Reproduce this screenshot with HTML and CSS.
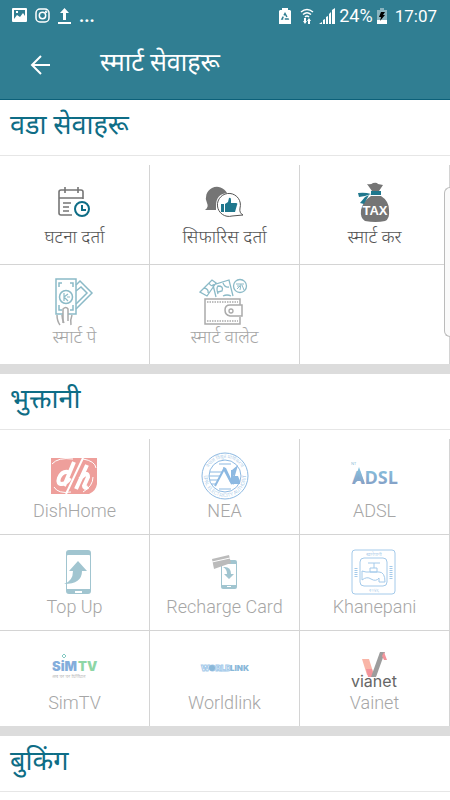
FILE: index.html
```html
<!DOCTYPE html>
<html lang="ne">
<head>
  <meta charset="UTF-8">
  <meta name="viewport" content="width=device-width, initial-scale=1">
  <title>स्मार्ट सेवाहरू</title>
  <link rel="stylesheet" href="styles.css">
</head>
<body>
  <header class="app-header">
    <div class="status-bar">
      <div class="status-left">
        <svg width="15" height="15" viewBox="0 0 15 15"><path fill="#fff" fill-rule="evenodd" d="M1 0h13a1 1 0 0 1 1 1v12a1 1 0 0 1-1 1H1a1 1 0 0 1-1-1V1a1 1 0 0 1 1-1zm1 2v9l3-4 3 2 3-4 2 3V2zm2 1h2v2H4z"/></svg>
        <svg width="15" height="15" viewBox="0 0 15 15" fill="none" stroke="#fff" stroke-width="1.5"><rect x="1" y="1" width="13" height="13" rx="4"/><circle cx="7.5" cy="7.5" r="3.2"/><circle cx="11.2" cy="3.8" r=".5"/></svg>
        <svg width="13" height="16" viewBox="0 0 13 16" fill="#fff"><path d="M6.5 0 11 5H8v7H5V5H2zM0 14h13v2H0z"/></svg>
        <span class="dots">...</span>
      </div>
      <div class="status-right">
        <svg width="12" height="16" viewBox="0 0 12 16"><path fill="#fff" d="M3 0h6v2h2l1 1v13H0V3l1-1h2z"/><path fill="none" stroke="#307e92" stroke-width="1.5" stroke-dasharray="4 1.5" d="M6 5.500 9 11H3z"/></svg>
        <svg class="wifi" width="14" height="16" viewBox="0 0 14 16" fill="none" stroke="#fff" stroke-width="1.5"><path d="M1 4q6-5 12 0M3 6.500q4-3.500 8 0M5 9q2-2 4 0"/><path fill="#fff" stroke="none" d="M4 10h2v3h1l-2 3-2-3h1zM9 10l2 3h-1v3H8v-3H7z"/></svg>
        <svg width="16" height="16" viewBox="0 0 16 16" fill="#fff"><path d="M0 16l3-2v2zM4 12l2-1v5H4zM7 9l2-1v8H7zM10 6l2-2v12h-2zM13 2l3-2v16h-3z"/></svg>
        <span>24%</span>
        <svg width="10" height="16" viewBox="0 0 10 16"><path fill="#8ab4bf" d="M3 0h4v2h3v10H0V2h3z"/><path fill="#fff" d="M0 12h10v4H0z"/><path d="M4 4h4L6 7h2l-5 6 1-4H2z"/></svg>
        <span class="clock">17:07</span>
      </div>
    </div>
    <div class="title-bar">
      <button class="back" aria-label="Back">
        <svg width="20" height="20" viewBox="0 0 20 20" fill="none" stroke="#fff" stroke-width="2"><path d="M20 10H2M11 1l-9 9 9 9"/></svg>
      </button>
      <h1>स्मार्ट सेवाहरू</h1>
    </div>
  </header>

  <main>
    <section>
      <h2>वडा सेवाहरू</h2>
      <div class="grid tall">
        <button class="tile">
          <svg class="icon" viewBox="2 2 48 48" fill="none" stroke="#757575" stroke-width="1.6"><path d="M23 39H12q-2 0-2-2V16q0-2 2-2h20q2 0 2 2v7M10 22h24M16 11v6M29 11v6M14 27h8M14 31h6M14 35h6"/><circle cx="33" cy="33" r="7" stroke="#0e6d86" stroke-width="2"/><path stroke="#0e6d86" stroke-width="2" d="M33 29v5h4"/></svg>
          <span>घटना दर्ता</span>
        </button>
        <button class="tile">
          <svg class="icon" viewBox="1 2 48 48"><path fill="#757575" d="M5 34q4-3 2-7A11 11 0 1 1 27 17q-11 1-11 13v4z"/><path fill="#fff" stroke="#555" stroke-linejoin="round" d="M43 39q-4-2-3-7a11.500 11.500 0 1 0-8 8z"/><path fill="#1f778d" d="M21 28h3v8h-3zM25 28l3-2 1-4q2-1 2 2v3h5q2 0 1 2l-2 7H25z"/></svg>
          <span>सिफारिस दर्ता</span>
        </button>
        <button class="tile">
          <svg class="icon" viewBox="0 0 48 48"><path fill="#757575" d="M16 6q4 1 6-1 4-1 5 1l5 1-4 6H21zM20 18h10q8 5 8 14 1 9-4 11-9 2-20 0-5-3-4-11 2-9 10-14z"/><path fill="#1f778d" d="M20 13h10v4H20zM7 15q7-1 13 1l-6 2-6 1zM18 17l-5 9-4-1 5-6z"/><text class="tax" x="24" y="37" text-anchor="middle">TAX</text></svg>
          <span>स्मार्ट कर</span>
        </button>
        <button class="tile" disabled>
          <svg class="icon" viewBox="1 1 48 48" fill="none" stroke="#8bbac7" stroke-width="1.5"><path d="M26 8l4-4 12 12-16 16M26 14l5-4 6 6-11 11"/><path d="M6 2h20v35H6zM9 10V6h3M20 6h3v4M9 28v5h3M20 33h3v-5"/><circle cx="16" cy="20" r="6.5"/><path d="M14 16v8M14 20l4-3M14 20l4 4M17 20h3" stroke-width="1.2"/><path stroke="#aaa" fill="#fff" d="M13 46V32q3-3 5 0v12"/><path stroke="#aaa" d="M7 38q0 6 3 10M22 38q-2 5-1 10M12 38q0 4 2 8"/></svg>
          <span>स्मार्ट पे</span>
        </button>
        <button class="tile" disabled>
          <svg class="icon" viewBox="2 1 48 48" fill="none" stroke="#8bbac7" stroke-width="1.3"><path d="M1 15 13 3l4 3-9 13zM5 11q5 1 4 5M10 6q2 4 5 2M17 20 14 8l16-5 4 16M19 17q-2-6 0-8 6 0 4 5l-4 1M24 6q2 5 6 4M24 19q4-2 8 0"/><circle cx="41" cy="9" r="6.5"/><path stroke-width="1" d="M37 7h8M38 9h3l-3 3M42 7l-1 6M43 8l2 5"/><path stroke="#aaa" stroke-width="1.5" d="M41 28V22H6v25h35v-7M31 28h12v11H31q-5-1-5-6 0-5 5-5z"/><circle cx="32" cy="34" r="2" stroke="#aaa"/><path stroke="#aaa" stroke-dasharray="1.5 1" d="M8 25h31M8 44h31"/></svg>
          <span>स्मार्ट वालेट</span>
        </button>
        <div class="tile"></div>
      </div>
    </section>

    <section>
      <h2>भुक्तानी</h2>
      <div class="grid">
        <button class="tile" disabled>
          <svg class="icon" viewBox="1 0 48 48"><path fill="#ee9f9b" d="M1 6h46v26q-1 7-8 10H1z"/><path fill="none" stroke="#fff" stroke-width="1" d="M2 12Q8 5 23 7M4 35q4 7 17 5M33 7q12 2 13 9M43 25q0 9-10 15"/><path fill="none" stroke="#fff" stroke-width="4" d="M18 20q-6-1-9 6-2 6 3 6 5-1 8-6M24 10 14 34M37 13 26 37M30 27q8-9 8-2l-4 9q0 3 4 1"/><path stroke="#fff" stroke-width="2" d="M33 6 16 42"/></svg>
          <span>DishHome</span>
        </button>
        <button class="tile" disabled>
          <svg class="icon" viewBox="0 0 48 48" fill="none" stroke="#8db9e2"><circle cx="24" cy="24" r="23"/><circle cx="24" cy="24" r="16"/><path id="ring-top" stroke="none" d="M6 24a18 18 0 0 1 36 0"/><path id="ring-bottom" stroke="none" d="M3 24a21 21 0 0 0 42 0"/><text class="seal"><textPath href="#ring-top" startOffset="50%" text-anchor="middle">नेपाल विद्युत प्राधिकरण</textPath></text><text class="seal"><textPath href="#ring-bottom" startOffset="50%" text-anchor="middle">NEPAL ELECTRICITY AUTHORITY</textPath></text><path d="M9 20h12M8 24h11M9 28h8M10 32h5M18 12h12M18 37h12"/><path stroke-width="2" d="m14 34 9-17 8 15V18"/><path fill="#8db9e2" stroke="none" d="m22 15 3 1 8 17-4-3zM31 18l6-5-4 14zM32 24h5l2 5v3h-8z"/></svg>
          <span>NEA</span>
        </button>
        <button class="tile" disabled>
          <svg class="icon" viewBox="0 0 48 48"><defs><linearGradient id="adsl" x2="0" y2="1"><stop stop-color="#87c9e4"/><stop offset="1" stop-color="#8497c0"/></linearGradient></defs><path fill="url(#adsl)" d="M2 32 8 15l6 17-6-4z"/><text class="nt" x="0" y="13">NT</text><text class="adsl" x="1" y="32" fill="url(#adsl)">ADSL</text></svg>
          <span>ADSL</span>
        </button>
        <button class="tile" disabled>
          <svg class="icon" viewBox="1 0 48 48"><path fill="#a1c5d0" fill-rule="evenodd" d="M19 2h19q3 0 3 3v38q0 3-3 3H19q-3 0-3-3V5q0-3 3-3zm-1 5q-1 0-1 1v33h23V8q0-1-1-1zm7 36v2h7v-2z"/><path fill="#a1c5d0" d="m28 13 9 10h-5q0 13-18 13 9-3 9-13h-4z"/></svg>
          <span>Top Up</span>
        </button>
        <button class="tile" disabled>
          <svg class="icon" viewBox="0 0 48 48"><path fill="#a1c5d0" fill-rule="evenodd" d="M20 12h14q2 0 2 2v25q0 2-2 2H22q-2 0-2-2zm1 4v21h14V16zm5 22v1h4v-1z"/><path fill="#bbb" d="m11 11 17-4 2 8-17 6z"/><path stroke="#fff" d="m11 14 18-4"/><path fill="#a1c5d0" d="M22 19q8-1 8 7h3l-5 5-5-5h3q0-5-4-7z"/></svg>
          <span>Recharge Card</span>
        </button>
        <button class="tile" disabled>
          <svg class="icon" viewBox="1 0 48 48" fill="none" stroke="#a4caea"><rect x="2" y="2" width="43" height="44" rx="3"/><rect x="10" y="10" width="27" height="28" rx="4"/><path d="M18 15h12M24 15v5M20 20h7v4h-7zM12 23v9q5-4 9-1 5 3 8-1v4h6q0-10-6-10H16z"/><text class="seal" x="24" y="8" text-anchor="middle">खानेपानी</text><text class="seal" x="24" y="44" text-anchor="middle">२०४६</text><path stroke-width="3" stroke-dasharray="1 1" d="M6 20v10M41 18v13"/></svg>
          <span>Khanepani</span>
        </button>
        <button class="tile" disabled>
          <svg class="icon" viewBox="0 0 48 48"><text class="sim" x="1" y="27" fill="#83addb">SiM</text><text class="sim" x="27" y="27" fill="#8ed6a6">TV</text><path fill="none" stroke="#83c9c2" d="m13 10 2 2-2 2-2-2z"/><text class="tag" x="1" y="34">अब घर घर डिजिटल</text></svg>
          <span>SimTV</span>
        </button>
        <button class="tile" disabled>
          <svg class="icon" viewBox="0 0 48 48"><text class="world outline" x="0" y="27">WORLD</text><text class="world" x="29" y="27">LINK</text><circle cx="11" cy="24" r="3" fill="#8ab8d9"/></svg>
          <span>Worldlink</span>
        </button>
        <button class="tile" disabled>
          <svg class="icon" viewBox="0 0 48 48"><path fill="#f9b5a7" d="M11 15h7l5 16h-7z"/><path fill="#f3949b" d="M15 25h6l2 8h-6z"/><path fill="#9d9d9d" d="M29 8h5L25 33h-5z"/><path fill="#f3949b" d="m33 8 3 8h-3l-2-4z"/><text class="via" x="0" y="43">vianet</text></svg>
          <span>Vainet</span>
        </button>
      </div>
    </section>

    <section>
      <h2>बुकिंग</h2>
    </section>
  </main>
  <div class="edge-handle"></div>
</body>
</html>
```
FILE: styles.css
```css
* {
  box-sizing: border-box;
}

body {
  margin: 0;
  font-family: Roboto, "Noto Sans", sans-serif;
  background: white;
  color: #555;
  overflow: hidden;
}

svg {
  display: block;
  flex: none;
}

button {
  font: inherit;
  color: inherit;
  background: none;
  border: none;
  padding: 0;
}

.app-header {
  background: #307e92;
  color: white;
  height: 100px;
  border-bottom: 1px solid #0c6079;
}

.status-bar {
  display: flex;
  justify-content: space-between;
  height: 31px;
  padding: 0 13px 0 12px;
  font-size: 18px;
}

.status-left,
.status-right {
  display: flex;
  align-items: center;
  gap: 8px;
}

.status-right {
  gap: 4px;
}

.dots {
  font-weight: 700;
}

.wifi {
  margin: 0 1px 0 5px;
}

.clock {
  margin-left: 4px;
  font-size: 17px;
}

.title-bar {
  display: flex;
  align-items: center;
  gap: 50px;
  height: 68px;
  padding: 0 30px;
}

h1 {
  margin: 0 0 4px;
  font-size: 25px;
  font-weight: 400;
  line-height: 32px;
}

section {
  border-bottom: 10px solid #dcdcdc;
}

h2 {
  margin: 0 0 9px;
  height: 56px;
  padding: 0 10px;
  border-bottom: 1px solid #e6e6e6;
  color: #0e6d86;
  font-size: 27px;
  font-weight: 400;
  line-height: 50px;
}

.grid {
  display: grid;
  grid-template-columns: repeat(3, 1fr);
  grid-template-rows: 96px 96px 95px;
}

.tall {
  grid-template-rows: 100px 99px;
}

.tile {
  display: flex;
  flex-direction: column;
  align-items: center;
  padding-top: 13px;
  border-right: 1px solid #d4d4d4;
  border-bottom: 1px solid #d4d4d4;
  font-size: 18px;
  font-weight: 300;
  line-height: 22px;
  white-space: nowrap;
}

.tile:nth-last-child(-n+3) {
  border-bottom: none;
}

.tile:disabled {
  color: #a6a6a6;
}

.icon {
  width: 48px;
  height: 48px;
  overflow: visible;
}

.tax {
  font: bold 13px "Liberation Sans", sans-serif;
  fill: white;
}

.adsl {
  font: bold 18px "Open Sans", sans-serif;
}

.nt {
  font: 4px "Open Sans", sans-serif;
  fill: #87b9d4;
}

.seal {
  font-size: 5px;
  fill: #8db9e2;
  stroke: none;
}

.sim {
  font: 900 13px Inter, sans-serif;
}

.tag {
  font-size: 5px;
  fill: #999;
}

.world {
  font: 900 8px Inter, sans-serif;
  fill: #8ab8d9;
}

.outline {
  fill: white;
  stroke: #a4caea;
}

.via {
  font: 16px Inter, sans-serif;
  fill: #666;
}

.edge-handle {
  position: absolute;
  top: 187px;
  right: 0;
  width: 6px;
  height: 150px;
  border: 1px solid #bbb;
  border-right: none;
  border-radius: 6px 0 0 6px;
  background: #fafafa;
}
```
